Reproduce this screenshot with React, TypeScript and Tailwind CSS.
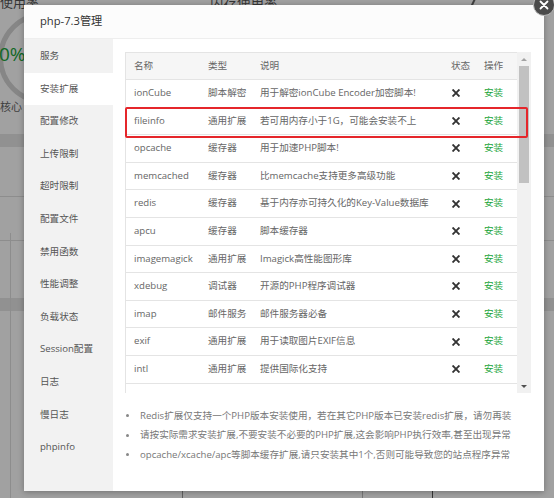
import React from 'react';

type Ext = { name: string; type: string; desc: string };

const exts: Ext[] = [
  { name: 'ionCube', type: '脚本解密', desc: '用于解密ionCube Encoder加密脚本!' },
  { name: 'fileinfo', type: '通用扩展', desc: '若可用内存小于1G，可能会安装不上' },
  { name: 'opcache', type: '缓存器', desc: '用于加速PHP脚本!' },
  { name: 'memcached', type: '缓存器', desc: '比memcache支持更多高级功能' },
  { name: 'redis', type: '缓存器', desc: '基于内存亦可持久化的Key-Value数据库' },
  { name: 'apcu', type: '缓存器', desc: '脚本缓存器' },
  { name: 'imagemagick', type: '通用扩展', desc: 'Imagick高性能图形库' },
  { name: 'xdebug', type: '调试器', desc: '开源的PHP程序调试器' },
  { name: 'imap', type: '邮件服务', desc: '邮件服务器必备' },
  { name: 'exif', type: '通用扩展', desc: '用于读取图片EXIF信息' },
  { name: 'intl', type: '通用扩展', desc: '提供国际化支持' },
];

const menu = [
  '服务',
  '安装扩展',
  '配置修改',
  '上传限制',
  '超时限制',
  '配置文件',
  '禁用函数',
  '性能调整',
  '负载状态',
  'Session配置',
  '日志',
  '慢日志',
  'phpinfo',
];

const notes = [
  'Redis扩展仅支持一个PHP版本安装使用，若在其它PHP版本已安装redis扩展，请勿再装',
  '请按实际需求安装扩展,不要安装不必要的PHP扩展,这会影响PHP执行效率,甚至出现异常',
  'opcache/xcache/apc等脚本缓存扩展,请只安装其中1个,否则可能导致您的站点程序异常',
];

const cols = 'grid grid-cols-[74px_52px_191px_33px_42px] items-center';

const Cross = () => (
  <svg width="8" height="8" viewBox="0 0 8 8" className="block">
    <path d="M1.2 1.2 L6.8 6.8 M6.8 1.2 L1.2 6.8" stroke="#333" strokeWidth="1.9" strokeLinecap="square" />
  </svg>
);

function Backdrop() {
  return (
    <div className="absolute inset-0 bg-white">
      <div className="absolute left-0 -top-[7px] text-[13px] text-[#555]">使用率</div>
      <div className="absolute left-[210px] -top-[7px] text-[13.5px] text-[#555]">内存使用率</div>
      <div className="absolute left-[472px] -top-[2px] h-[10px] w-[2px] rotate-[25deg] bg-[#666]" />
      <div className="absolute left-[-2px] top-[12px] h-[92px] w-[92px] rounded-full border-[5px] border-[#d4d4d4]" />
      <div className="absolute left-[-1px] top-[45px] text-[19px] leading-none text-[#20a53a]">0%</div>
      <div className="absolute left-0 top-[101px] text-[11px] leading-none text-[#666]">核心</div>
      <div className="absolute left-0 right-0 top-[134px] h-[13px] bg-[#e6e6e6]" />
      <div className="absolute left-0 right-0 top-[298px] h-[13px] bg-[#e6e6e6]" />
      <div className="absolute left-0 right-0 top-[196px] h-px bg-[#e0e0e0]" />
      <div className="absolute left-0 right-0 top-[240px] h-px bg-[#e0e0e0]" />
      <div className="absolute left-[10px] top-[233px] bottom-0 w-px bg-[#e0e0e0]" />
      <div className="absolute left-[182px] top-[480px] bottom-0 w-px bg-[#999]" />
      <div className="absolute left-[362px] top-[480px] bottom-0 w-px bg-[#bbb]" />
      <div className="absolute left-[432px] top-[480px] bottom-0 w-px bg-[#555]" />
    </div>
  );
}

export default function App() {
  return (
    <div className="relative h-[498px] w-[554px] overflow-hidden font-['Open_Sans','Noto_Sans_CJK_SC',sans-serif]">
      <Backdrop />
      <div className="absolute inset-0 bg-black/[0.37]" />

      <div className="absolute left-[24px] top-[5px] flex h-[486px] w-[520px] flex-col bg-white shadow-[0_1px_6px_rgba(0,0,0,0.3)]">
        <div className="flex h-[34px] shrink-0 items-center border-b border-[#eee] bg-[#fcfcfc] pl-4 text-[11.2px] text-[#333]">
          php-7.3管理
        </div>

        <div className="flex min-h-0 flex-1">
          <div className="flex w-[89px] shrink-0 flex-col bg-[#f2f2f2] pt-px">
            {menu.map((m, i) => (
              <div
                key={m}
                className={`flex h-[32.6px] items-center pl-4 text-[9.6px] text-[#555] ${i === 1 ? 'bg-white' : ''}`}
              >
                {m}
              </div>
            ))}
          </div>

          <div className="flex-1 pl-3 pr-[13px] pt-[13px]">
            <div className="flex h-[341px]">
              <div className="w-[392px] overflow-hidden border-l border-t border-[#e4e4e4] text-[9.6px] text-[#666]">
                <div className={`${cols} h-[27px] border-b border-[#e4e4e4] bg-[#f6f6f6]`}>
                  <span className="pl-2">名称</span>
                  <span className="pl-2">类型</span>
                  <span className="pl-2">说明</span>
                  <span className="pl-2">状态</span>
                  <span className="pl-2">操作</span>
                </div>
                {exts.map((e) => (
                  <div key={e.name} className={`${cols} h-[27.6px] border-b border-[#e4e4e4]`}>
                    <span className="pl-2">{e.name}</span>
                    <span className="pl-2">{e.type}</span>
                    <span className="whitespace-nowrap pl-2">{e.desc}</span>
                    <span className="pl-[9px]">
                      <Cross />
                    </span>
                    <span className="pl-2 text-[#20a53a]">安装</span>
                  </div>
                ))}
                <div className="h-[27.6px] border-b border-[#e4e4e4]" />
              </div>

              <div className="flex w-[14px] flex-col bg-[#f1f1f1]">
                <div className="flex h-[14px] items-center justify-center">
                  <div className="h-0 w-0 border-x-[3px] border-b-[3px] border-x-transparent border-b-[#a3a3a3]" />
                </div>
                <div className="flex-1 px-[2px]">
                  <div className="h-[117px] bg-[#c1c1c1]" />
                </div>
                <div className="flex h-[14px] items-center justify-center">
                  <div className="h-0 w-0 border-x-[3px] border-t-[3px] border-x-transparent border-t-[#505050]" />
                </div>
              </div>
            </div>

            <ul className="mt-[13px] text-[9.6px] text-[#777]">
              {notes.map((n) => (
                <li key={n} className="flex h-[19.5px] items-center whitespace-nowrap">
                  <span className="ml-[1px] mr-[11px] h-[3px] w-[3px] rounded-full bg-[#888]" />
                  {n}
                </li>
              ))}
            </ul>
          </div>
        </div>

        <div className="absolute left-[101px] top-[102px] h-[31px] w-[403px] rounded-[2px] border-2 border-[#e5262b]" />

        <div className="absolute -right-[11px] -top-[11px] flex h-[22px] w-[22px] items-center justify-center rounded-full border border-[#bbb] bg-[#4a4a4a]">
          <svg width="10" height="10" viewBox="0 0 10 10">
            <path d="M1.5 1.5 L8.5 8.5 M8.5 1.5 L1.5 8.5" stroke="#fff" strokeWidth="1.8" strokeLinecap="round" />
          </svg>
        </div>
      </div>
    </div>
  );
}
